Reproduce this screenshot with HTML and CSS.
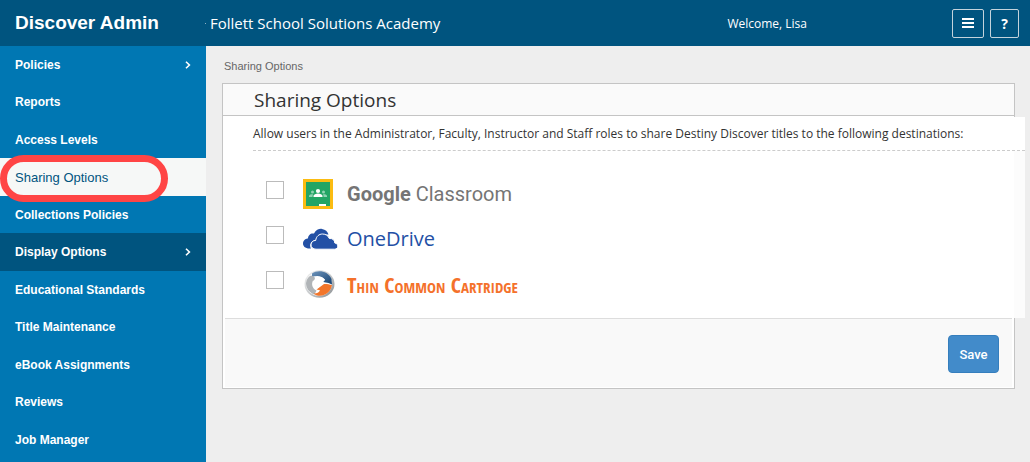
FILE: index.html
```
<!DOCTYPE html>
<html lang="en">
<head>
<meta charset="utf-8">
<title>Discover Admin</title>
<link rel="stylesheet" href="styles.css">
</head>
<body>
<header class="topbar">
  <div class="brand">Discover Admin</div>
  <div class="school">Follett School Solutions Academy</div>
  <div class="welcome">Welcome, Lisa</div>
  <div class="tools">
    <button class="tool tool-menu" type="button" aria-label="Menu">
      <svg width="14" height="12" viewBox="0 0 14 12"><path d="M1 1h12v2H1zM1 5h12v2H1zM1 9h12v2H1z" fill="#fff"/></svg>
    </button>
    <button class="tool" type="button" aria-label="Help">?</button>
  </div>
</header>
<div class="layout">
  <nav class="sidebar">
    <ul class="menu">
      <li><a href="#">Policies <svg class="chevron" width="6" height="8" viewBox="0 0 6 8"><path d="M1 .7 4.4 4 1 7.3"/></svg></a></li>
      <li><a href="#">Reports</a></li>
      <li><a href="#">Access Levels</a></li>
      <li class="active"><a href="#" aria-current="page">Sharing Options</a></li>
      <li><a href="#">Collections Policies</a></li>
      <li class="open"><a href="#">Display Options <svg class="chevron" width="6" height="8" viewBox="0 0 6 8"><path d="M1 .7 4.4 4 1 7.3"/></svg></a></li>
      <li><a href="#">Educational Standards</a></li>
      <li><a href="#">Title Maintenance</a></li>
      <li><a href="#">eBook Assignments</a></li>
      <li><a href="#">Reviews</a></li>
      <li><a href="#">Job Manager</a></li>
    </ul>
  </nav>
  <main class="content">
    <div class="crumb">Sharing Options</div>
    <section class="panel">
      <h1 class="panel-title">Sharing Options</h1>
      <div class="panel-body">
        <p class="intro">Allow users in the Administrator, Faculty, Instructor and Staff roles to share Destiny Discover titles to the following destinations:</p>
        <div class="options">
          <div class="option">
            <input type="checkbox" id="google">
            <label for="google">
              <svg width="36" height="32" viewBox="0 0 36 32"><path d="M0 1h30v30H0z" fill="#fbbc12"/><path d="M3 4h24v24H3z" fill="#22a565"/><circle cx="15" cy="13" r="2.1" fill="#fff"/><path d="M10.5 19v-1.2c0-1.5 2.5-2.4 4.500-2.400s4.500.9 4.500 2.400V19z" fill="#fff"/><g fill="#8fd2b2"><circle cx="9.500" cy="14" r="1.500"/><circle cx="20.500" cy="14" r="1.500"/><path d="M6 19v-1c0-1.200 2-1.900 4.200-1.600Q9.500 17 9.500 19zM24 19v-1c0-1.200-2-1.900-4.200-1.600.7.6.7 1.300.7 2.600z"/></g><path d="M16 26h7v2h-7z" fill="#fff"/></svg>
              <span class="logo logo-google"><b>Google</b> Classroom</span>
            </label>
          </div>
          <div class="option">
            <input type="checkbox" id="onedrive">
            <label for="onedrive">
              <svg width="36" height="32" viewBox="0 0 36 32"><path d="M8 25.500C2 26 0 23 0 20.500 0 17.500 2.300 15.600 5 15.500 5 12 8 9.800 11 10.600 13 6.500 16.500 5.500 19 5.900c3.500.5 5.600 2.500 6.500 5.600C17 11 14 14 13 17c-5 .5-7 5-5 8.500z" fill="#2350a5"/><path d="M13 26.200c-3 0-5-2-5-4.300 0-2.700 2-4.500 4.700-4.500.5-4 3.300-6.400 6.800-6.400 3.200 0 5.700 1.700 6.800 4.500 3.400-.3 5.500 1.700 5.500 4.500 2 .3 3 1.500 3 3.100 0 1.800-1.300 3.100-3.300 3.100z" fill="#2350a5" stroke="#fff" stroke-width="1"/></svg>
              <span class="logo logo-onedrive">OneDrive</span>
            </label>
          </div>
          <div class="option">
            <input type="checkbox" id="cartridge">
            <label for="cartridge">
              <svg width="36" height="32" viewBox="0 0 36 32"><defs><linearGradient id="rim" x1="0" y1="0" x2="1" y2="1"><stop offset="0" stop-color="#f4f4f4"/><stop offset=".5" stop-color="#c8cbcd"/><stop offset="1" stop-color="#85898c"/></linearGradient><linearGradient id="blue" x1="0" y1="0" x2="1" y2="1"><stop offset="0" stop-color="#6e94bb"/><stop offset="1" stop-color="#14406f"/></linearGradient></defs><ellipse cx="16.500" cy="16" rx="15" ry="13.800" fill="url(#rim)"/><ellipse cx="16" cy="15.700" rx="13" ry="12" fill="#fff"/><path d="M9 5.500C15 1.500 25 3 28.500 11l.5 5.500-3.500-1.500-5.500-1 2-2C19 7.500 14 7 9 9z" fill="url(#blue)"/><path d="M3 15C3.500 11 5.500 8.500 8 7.500l3.500 1.500 1 4.500-2.500-1c-2 4-.5 8 3.500 10l-2 4C6 24.500 3 20 3 15z" fill="#b0b4b7"/><path d="M29 17c-1 6-5.500 10.500-12 10.800-2.500 0-5-.8-6.500-2.300 3 .3 5.500-1 6.500-3.300l-3.500-.7 7.500-5.500c2-.3 5 .2 8 1z" fill="#f2762b"/><path d="M10.500 13c1.500-4 7.500-6 11.500-1.500l-2 2.500 1.500.8-8 6.200C11 20 9.500 17 10.500 13z" fill="#fff"/></svg>
              <span class="logo logo-cartridge">Thin Common Cartridge</span>
            </label>
          </div>
        </div>
      </div>
      <footer class="panel-footer"><button class="save" type="button">Save</button></footer>
    </section>
  </main>
</div>
</body>
</html>
```
FILE: styles.css
```
*, *::before, *::after { box-sizing: border-box; }

body {
  margin: 0;
  min-height: 100vh;
  display: flex;
  flex-direction: column;
  background: #eee;
  color: #333;
  font-family: "Open Sans", sans-serif;
}

.topbar {
  display: flex;
  align-items: center;
  height: 46px;
  padding-right: 11px;
  background: #00547f;
  color: #fff;
}

.brand {
  width: 205px;
  padding-left: 15px;
  font: bold 19px/46px "Liberation Sans", Arial, sans-serif;
}

.school {
  display: flex;
  align-items: center;
  gap: 4px;
  flex: 1;
  font-size: 15px;
}

.school::before {
  content: "";
  width: 1px;
  height: 1px;
  background: #8fb0c4;
}

.welcome {
  margin-right: 145px;
  font-size: 12px;
}

.tools { display: flex; gap: 6px; }

.tool {
  display: flex;
  align-items: center;
  justify-content: center;
  width: 29px;
  height: 29px;
  padding: 0;
  border: 1px solid #c4d3dc;
  border-radius: 2px;
  background: none;
  color: #fff;
  font: bold 14px "Open Sans", sans-serif;
}

.tool-menu { width: 32px; }

.layout { display: flex; flex: 1; }

.sidebar {
  width: 206px;
  flex-shrink: 0;
  background: #0077b3;
}

.menu {
  margin: 0;
  padding: 0;
  list-style: none;
  font: bold 12px "Liberation Sans", Arial, sans-serif;
}

.menu li { height: 37px; }
.menu li:nth-child(even) { height: 38px; }

.menu a {
  display: flex;
  align-items: center;
  justify-content: space-between;
  height: 100%;
  padding: 0 15px;
  color: #fff;
  text-decoration: none;
}

.menu .open { background: #00547f; }

.menu .active {
  position: relative;
  background: #f6f8f7;
  font-size: 13px;
  font-weight: normal;
}

.menu .active a { color: #00547f; }

.menu .active::after {
  content: "";
  position: absolute;
  z-index: 1;
  left: 0;
  top: -3px;
  width: 168px;
  height: 47px;
  border: 7px solid #ff4545;
  border-radius: 24px;
  pointer-events: none;
}

.chevron {
  fill: none;
  stroke: #fff;
  stroke-width: 1.6;
}

.content {
  flex: 1;
  min-width: 0;
  padding: 0 15px 0 16px;
}

.crumb {
  padding: 12px 2px 9px;
  color: #666;
  font: 11px/16px "Liberation Sans", Arial, sans-serif;
}

.panel {
  border: 1px solid #c4c4c4;
  background: #fff;
}

.panel-title {
  margin: 0;
  padding: 2px 31px 0;
  border-bottom: 1px solid #c4c4c4;
  background: #fafafa;
  font-size: 19px;
  font-weight: normal;
  line-height: 29px;
}

.panel-body {
  position: relative;
  margin: 1px -11px 0 0;
  padding-left: 30px;
  background: #fff;
}

.intro {
  margin: 0;
  border-bottom: 1px dashed #ccc;
  font-size: 12px;
  line-height: 33px;
}

.options {
  padding: 20px 13px 12px;
  background: linear-gradient(to left, #fcfcfc 11px, #fff 11px);
}

.option {
  display: flex;
  align-items: center;
  gap: 19px;
  height: 45px;
}

.option input {
  appearance: none;
  width: 18px;
  height: 18px;
  margin: 0 0 7px;
  border: 1px solid #bbb;
  background: #fff;
}

.option label {
  display: flex;
  align-items: center;
  gap: 8px;
}

.logo { line-height: 32px; white-space: nowrap; }

.logo-google { color: #757575; font-family: Roboto, sans-serif; font-size: 20px; }
.logo-onedrive { color: #2350a5; font-size: 20px; }

.logo-cartridge {
  color: #f4712b;
  font-family: "Open Sans Condensed", "Open Sans", sans-serif;
  font-size: 22px;
  line-height: 30px;
  font-variant: small-caps;
}

.panel-footer {
  display: flex;
  justify-content: flex-end;
  margin: 0 2px 1px;
  padding: 16px 13px 14px;
  border-top: 1px solid #ddd;
  background: #f9f9f9;
}

.save {
  width: 51px;
  height: 38px;
  padding: 0;
  border: 1px solid #357ebd;
  border-radius: 4px;
  background: #428bca;
  color: #fff;
  font: 500 13px Roboto, sans-serif;
}
```
